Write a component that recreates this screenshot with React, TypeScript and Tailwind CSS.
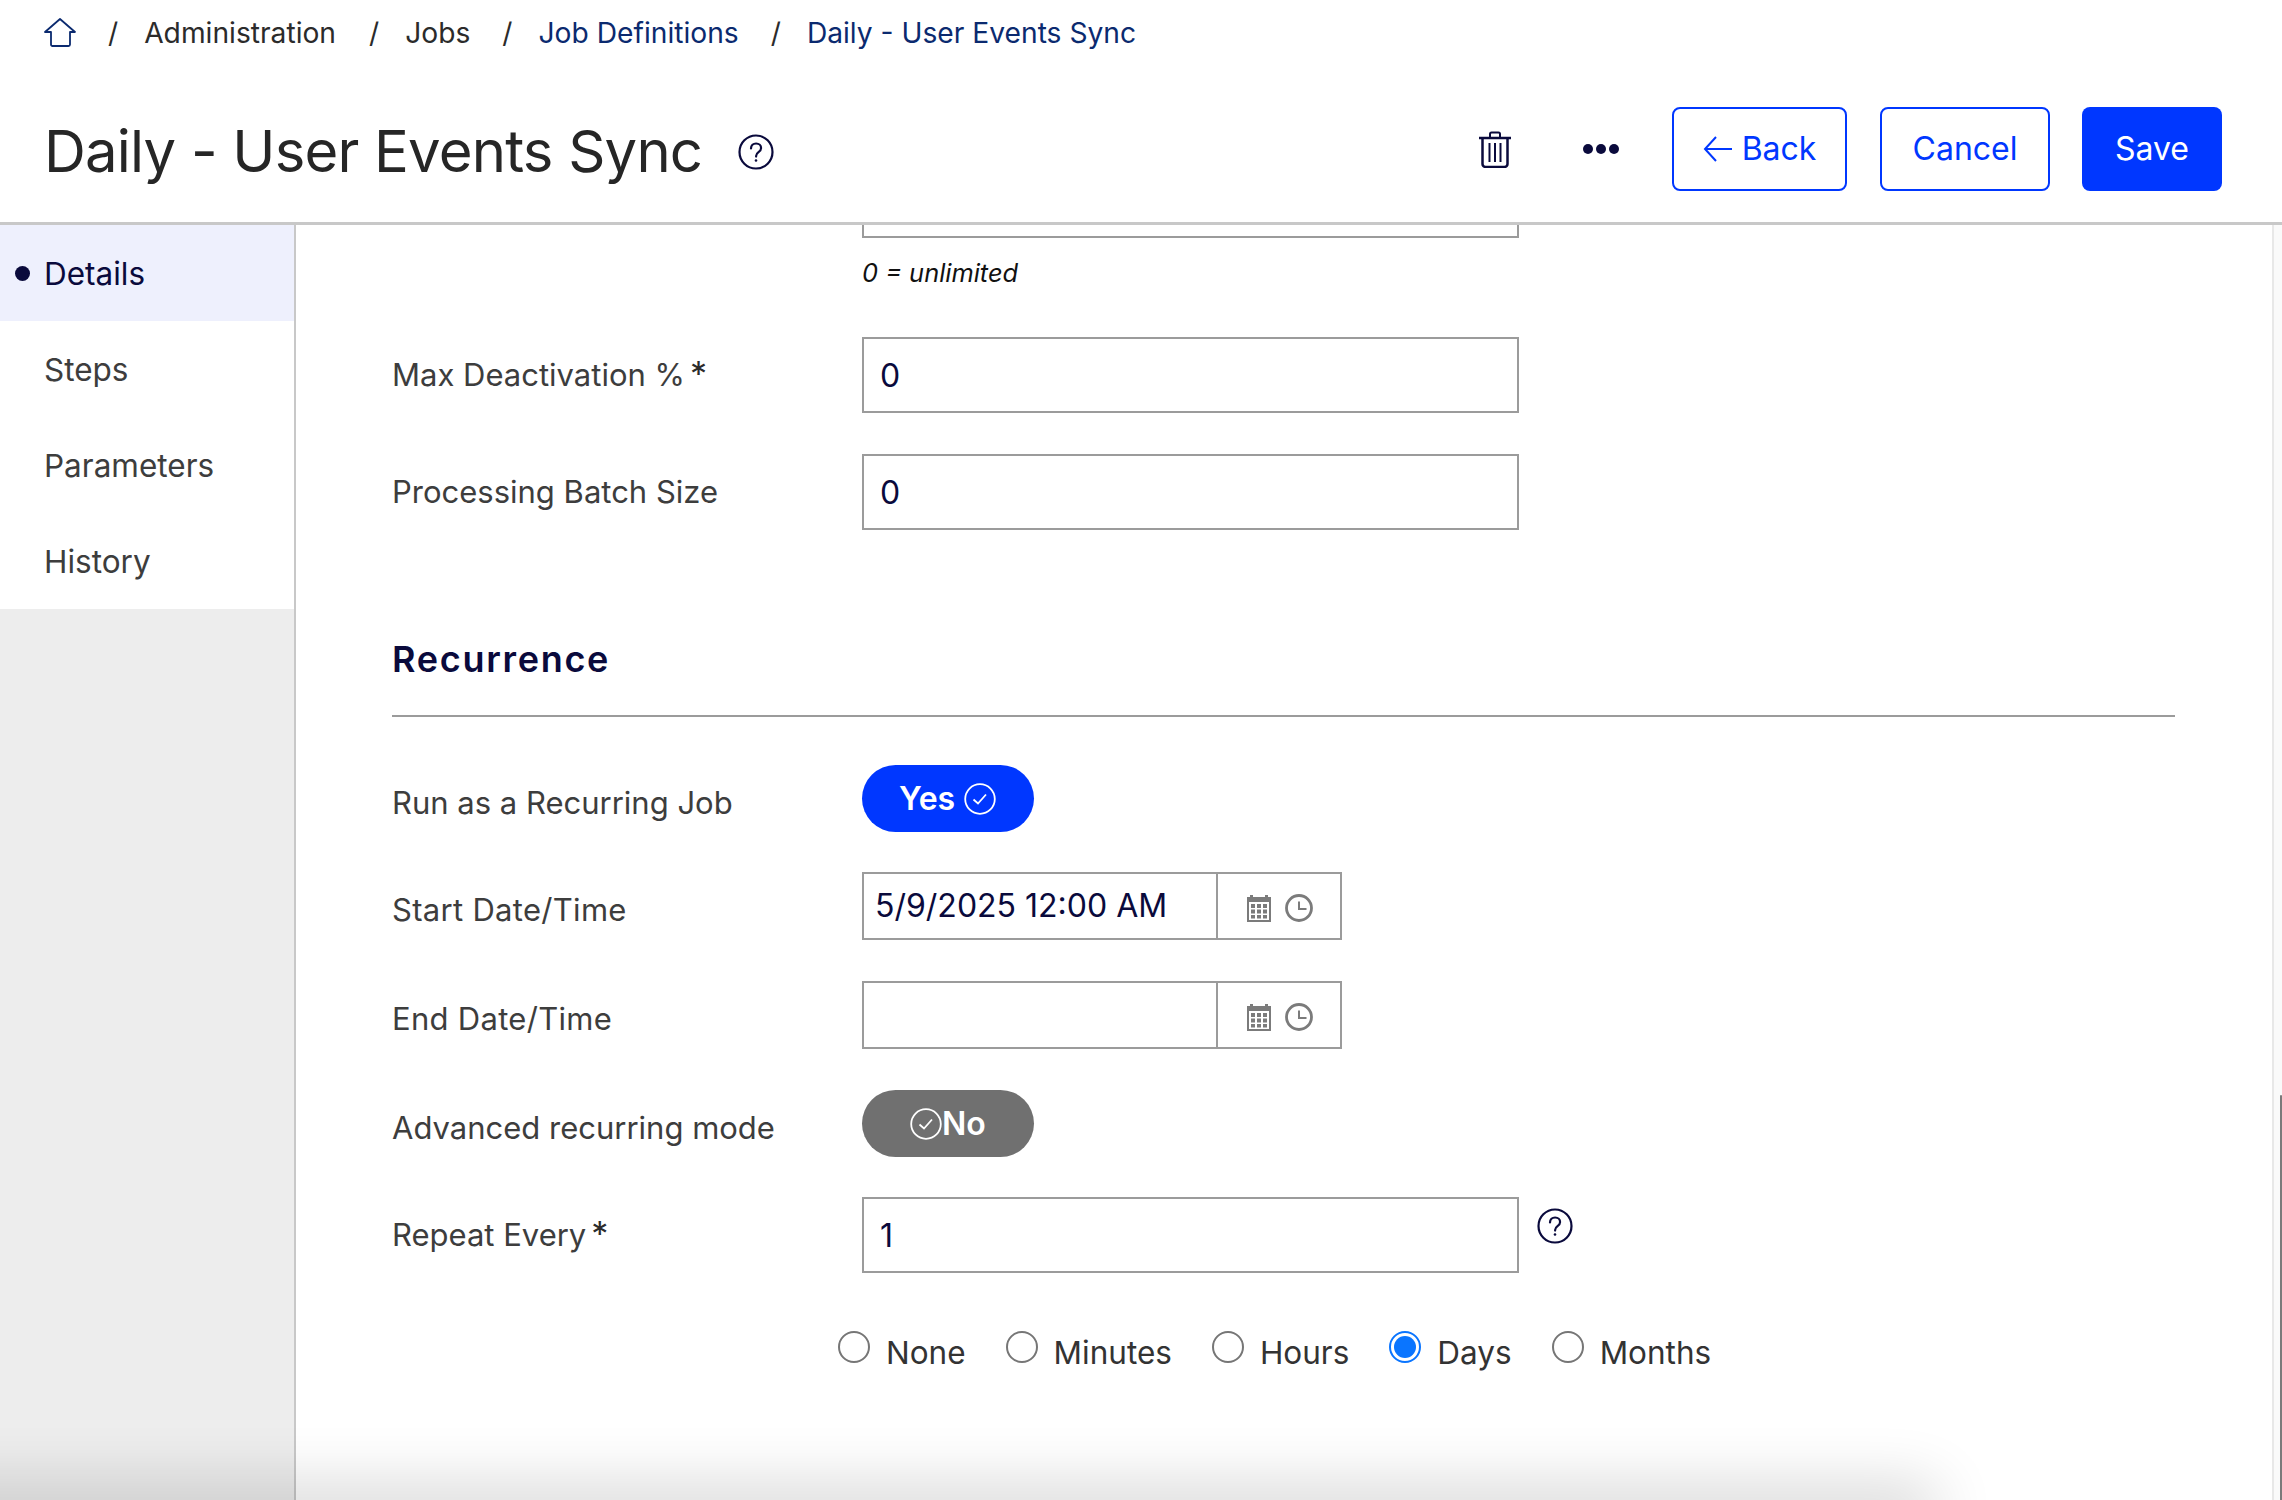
import React from 'react';

const HomeIcon = () => (
  <svg width="34" height="30" viewBox="0 0 34 30" fill="none" stroke="#0b2a6f" strokeWidth="1.800" className="mb-[3px] ml-[43px]">
    <path d="M2 15 17 2l15 13h-5v12.5a1.5 1.5 0 0 1-1.500 1.500H9.500A1.500 1.500 0 0 1 8 27.500V15z" strokeLinejoin="round" />
  </svg>
);

const HelpIcon = ({ size = 36 }: { size?: number }) => (
  <svg width={size} height={size} viewBox="0 0 36 36" fill="none" stroke="#0a0a3c" strokeWidth="2.2">
    <circle cx="18" cy="18" r="16.500" />
    <path d="M13 14.500c0-3 2.200-5 5.100-5s5 1.900 5 4.500c0 2-1 3-2.600 4.100-1.500 1-2.400 1.900-2.400 4v.5" strokeLinecap="round" />
    <circle cx="18" cy="26.500" r="1.300" fill="#0a0a3c" stroke="none" />
  </svg>
);

const TrashIcon = () => (
  <svg width="32" height="37" viewBox="0 0 32 37" fill="none" stroke="#0a0a3c" strokeWidth="2.500">
    <path d="M0 7h32" />
    <path d="M11 6V3a1.500 1.500 0 0 1 1.500-1.500h7A1.500 1.500 0 0 1 21 3v3" strokeWidth="2" />
    <path d="M3.500 7v26a3 3 0 0 0 3 3h19a3 3 0 0 0 3-3V7" />
    <path d="M10.500 12v19M16 12v19M21.500 12v19" strokeWidth="2" />
  </svg>
);

const CheckCircle = () => (
  <svg width="32" height="32" viewBox="0 0 32 32" fill="none" stroke="#fff" strokeWidth="1.800">
    <circle cx="16" cy="16" r="14.800" />
    <path d="M9.500 16.500 14 20.500l8-9" />
  </svg>
);

const CalendarIcon = () => (
  <svg width="24" height="28" viewBox="0 0 24 28" fill="#7b7b7b">
    <path d="M0 3h3V1h3v2h12V1h3v2h3v25H0zm2 5v18h20V8z" fillRule="evenodd" />
    <path d="M4 10h4v4H4zM10 10h4v4h-4zM16 10h4v4h-4zM4 15.500h4v4H4zM10 15.500h4v4h-4zM16 15.500h4v4h-4zM4 21h4v3.500H4zM10 21h4v3.500h-4zM16 21h4v3.500h-4z" />
  </svg>
);

const ClockIcon = () => (
  <svg width="28" height="28" viewBox="0 0 28 28" fill="none" stroke="#7b7b7b" strokeWidth="2.800">
    <circle cx="14" cy="14" r="12.500" />
    <path d="M14 7.500V15h7.500" strokeWidth="2" />
  </svg>
);

const Slash = ({ className }: { className: string }) => <span className={`text-[#2b2b2b] ${className}`}>/</span>;

const TextInput = ({ value, className = '' }: { value: string; className?: string }) => (
  <div className={`flex h-[76px] w-[657px] items-center border-2 border-[#9b9b9b] bg-white pl-[16px] pt-[2px] text-[32px] text-[#0a0a3c] ${className}`}>
    {value}
  </div>
);

const Row = ({ label, required, labelClass = '', className = '', children }: { label: string; required?: boolean; labelClass?: string; className?: string; children: React.ReactNode }) => (
  <div className={`flex items-center ${className}`}>
    <div className={`w-[470px] shrink-0 text-[31px] text-[#3d3d3d] ${labelClass}`}>
      {label}
      {required && <span className="ml-[5px] text-[34px] leading-[30px] text-[#2b2b2b]">*</span>}
    </div>
    {children}
  </div>
);

const DateField = ({ value }: { value?: string }) => (
  <div className="flex h-[68px] w-[480px] border-2 border-[#9b9b9b]">
    <div className="flex w-[354px] items-center border-r-2 border-[#9b9b9b] pl-[11px] text-[32px] text-[#0a0a3c]">{value}</div>
    <div className="flex flex-1 items-center pl-[29px] pt-[3px]">
      <CalendarIcon />
      <span className="ml-[14px] flex">
        <ClockIcon />
      </span>
    </div>
  </div>
);

const Radio = ({ label, checked, className = '' }: { label: string; checked?: boolean; className?: string }) => (
  <div className={`flex items-start ${className}`}>
    <span className={`flex h-[32px] w-[32px] items-center justify-center rounded-full border-2 ${checked ? 'border-[#0a75ff]' : 'border-[#767676]'}`}>
      {checked && <span className="h-[22px] w-[22px] rounded-full bg-[#0a75ff]" />}
    </span>
    <span className="ml-[16px] mt-[2px] text-[31.5px] leading-[40px] text-[#333333]">{label}</span>
  </div>
);

const navItems = ['Steps', 'Parameters', 'History'];

export default function App() {
  return (
    <div className="relative h-[1500px] w-[2282px] overflow-hidden bg-white font-['Inter',sans-serif]">
      <header className="h-[225px] border-b-[3px] border-[#c8c8c8]">
        <nav className="flex h-[66px] items-center pt-[1px] text-[28.200px]">
          <HomeIcon />
          <Slash className="ml-[31px]" />
          <span className="ml-[26px] text-[#2b2b2b]">Administration</span>
          <Slash className="ml-[33px]" />
          <span className="ml-[26px] text-[#2b2b2b]">Jobs</span>
          <Slash className="ml-[32px]" />
          <span className="ml-[26px] text-[#0b2a6f]">Job Definitions</span>
          <Slash className="ml-[32px]" />
          <span className="ml-[26px] text-[#0b2a6f]">Daily - User Events Sync</span>
        </nav>
        <div className="flex h-[156px] items-center pr-[60px] pt-[9px]">
          <h1 className="ml-[44px] mt-[5px] text-[58px] font-normal tracking-[-0.8px] text-[#262626]">Daily - User Events Sync</h1>
          <span className="ml-[36px] mt-[7px] flex">
            <HelpIcon />
          </span>
          <div className="ml-auto flex items-center">
            <span className="mt-[2px] flex">
              <TrashIcon />
            </span>
            <span className="ml-[72px] flex gap-[3px]">
              <span className="h-[10px] w-[10px] rounded-full bg-[#0a0a3c]" />
              <span className="h-[10px] w-[10px] rounded-full bg-[#0a0a3c]" />
              <span className="h-[10px] w-[10px] rounded-full bg-[#0a0a3c]" />
            </span>
            <button className="ml-[53px] flex h-[84px] w-[175px] items-center justify-center rounded-[8px] border-2 border-[#0037ff] text-[32px] text-[#0037ff]">
              <svg width="30" height="26" viewBox="0 0 30 26" fill="none" stroke="#0037ff" strokeWidth="2" className="mr-[9px]">
                <path d="M29 13H2M13 1 2 13l11 12" />
              </svg>
              Back
            </button>
            <button className="ml-[33px] h-[84px] w-[170px] rounded-[8px] border-2 border-[#0037ff] text-[32px] text-[#0037ff]">Cancel</button>
            <button className="ml-[32px] h-[84px] w-[140px] rounded-[8px] bg-[#0037ff] text-[32px] text-white">Save</button>
          </div>
        </div>
      </header>

      <div className="flex h-[1275px]">
        <aside className="w-[296px] shrink-0 border-r-2 border-[#c8c8c8] bg-[#ededed]">
          <div className="flex h-[96px] items-center bg-[#eef0fd] pt-[1px] text-[31.500px] text-[#0a0a3c]">
            <span className="ml-[15px] h-[15px] w-[15px] rounded-full bg-[#0a0a3c]" />
            <span className="ml-[14px]">Details</span>
          </div>
          {navItems.map((item) => (
            <div key={item} className="flex h-[96px] items-center bg-white pl-[44px] pt-[1px] text-[31.500px] text-[#3d3d3d]">
              {item}
            </div>
          ))}
        </aside>

        <main className="flex-1 overflow-hidden pl-[96px]">
          <div className="ml-[470px] -mt-[63px]">
            <TextInput value="" />
            <p className="mt-[17px] text-[25.400px] italic leading-[36px] text-[#111111]">0 = unlimited</p>
          </div>
          <Row label="Max Deactivation %" required className="mt-[46px]">
            <TextInput value="0" />
          </Row>
          <Row label="Processing Batch Size" className="mt-[41px]">
            <TextInput value="0" />
          </Row>

          <h2 className="mt-[109px] text-[36px] font-semibold leading-[40px] tracking-[1.700px] text-[#0a0a3c]">Recurrence</h2>
          <div className="mt-[36px] h-[2px] w-[1783px] bg-[#9b9b9b]" />

          <Row label="Run as a Recurring Job" labelClass="mt-[10px]" className="mt-[48px]">
            <div className="flex h-[67px] w-[172px] items-center rounded-full bg-[#0037ff] pl-[37px] text-[32px] font-semibold text-white">
              Yes
              <span className="ml-[9px] flex">
                <CheckCircle />
              </span>
            </div>
          </Row>
          <Row label="Start Date/Time" labelClass="mt-[8px] tracking-[0.3px]" className="mt-[40px]">
            <DateField value="5/9/2025 12:00 AM" />
          </Row>
          <Row label="End Date/Time" labelClass="mt-[8px] tracking-[0.3px]" className="mt-[41px]">
            <DateField />
          </Row>
          <Row label="Advanced recurring mode" labelClass="mt-[10px]" className="mt-[41px]">
            <div className="flex h-[67px] w-[172px] items-center rounded-full bg-[#707070] pl-[48px] text-[32px] font-semibold text-white">
              <CheckCircle />
              No
            </div>
          </Row>
          <Row label="Repeat Every" required className="mt-[40px]">
            <TextInput value="1" />
            <span className="ml-[18px] mb-[18px] flex">
              <HelpIcon />
            </span>
          </Row>

          <div className="ml-[446px] mt-[58px] flex">
            <Radio label="None" />
            <Radio label="Minutes" className="ml-[40px]" />
            <Radio label="Hours" className="ml-[40px]" />
            <Radio label="Days" checked className="ml-[40px]" />
            <Radio label="Months" className="ml-[40px]" />
          </div>
        </main>

        <div className="relative w-[10px] shrink-0 border-l-2 border-[#e8e8e8] bg-[#fafafa]">
          <div className="absolute right-0 top-[870px] h-[405px] w-[2px] rounded-t-full bg-[#7a7a7a]" />
        </div>
      </div>

      {/* shadow from something just below the fold */}
      <div className="absolute left-[-100px] top-[1500px] h-[20px] w-[2020px] shadow-[0_0_60px_16px_rgba(0,0,0,0.16)]" />
    </div>
  );
}
